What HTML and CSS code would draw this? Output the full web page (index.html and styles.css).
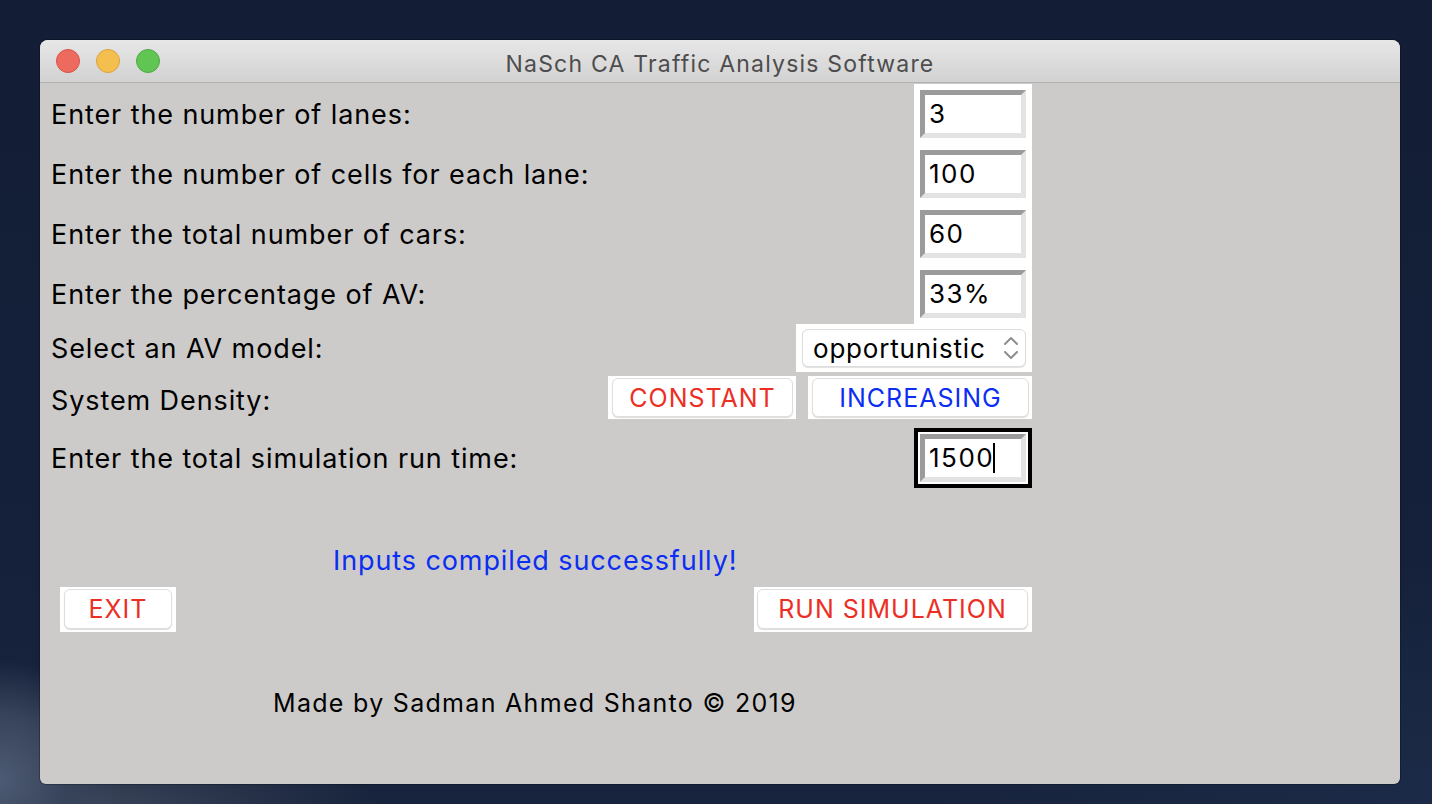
FILE: index.html
```html
<!DOCTYPE html>
<html>
<head>
<meta charset="utf-8">
<title>NaSch CA Traffic Analysis Software</title>
<link rel="stylesheet" href="styles.css">
</head>
<body>
<div class="window">
  <div class="titlebar">
    <div class="lights">
      <span class="light red"></span>
      <span class="light yellow"></span>
      <span class="light green"></span>
    </div>
    <div class="title">NaSch CA Traffic Analysis Software</div>
    <div></div>
  </div>
  <div class="content">
    <div class="form">
      <div class="row entry-row">
        <span class="label">Enter the number of lanes:</span>
        <div class="entry-frame"><div class="entry">3</div></div>
      </div>
      <div class="row entry-row">
        <span class="label">Enter the number of cells for each lane:</span>
        <div class="entry-frame"><div class="entry">100</div></div>
      </div>
      <div class="row entry-row">
        <span class="label">Enter the total number of cars:</span>
        <div class="entry-frame"><div class="entry">60</div></div>
      </div>
      <div class="row entry-row">
        <span class="label">Enter the percentage of AV:</span>
        <div class="entry-frame"><div class="entry">33%</div></div>
      </div>
      <div class="row select-row">
        <span class="label">Select an AV model:</span>
        <div class="select-frame">
          <div class="select">
            <span class="select-text">opportunistic</span>
            <svg class="chevrons" width="16" height="26" viewBox="0 0 16 26">
              <path d="M2 9 L8 3 L14 9" fill="none" stroke="#8e8e8e" stroke-width="2" stroke-linecap="round" stroke-linejoin="round"/>
              <path d="M2 17 L8 23 L14 17" fill="none" stroke="#8e8e8e" stroke-width="2" stroke-linecap="round" stroke-linejoin="round"/>
            </svg>
          </div>
        </div>
      </div>
      <div class="row density-row">
        <span class="label label-low">System Density:</span>
        <div class="density-buttons">
          <div class="btn-frame constant-frame"><div class="btn red-text">CONSTANT</div></div>
          <div class="btn-frame increasing-frame"><div class="btn blue-text">INCREASING</div></div>
        </div>
      </div>
      <div class="row entry-row">
        <span class="label">Enter the total simulation run time:</span>
        <div class="entry-frame focused"><div class="entry">1500<span class="caret"></span></div></div>
      </div>
      <div class="message">Inputs compiled successfully!</div>
      <div class="action-row">
        <div class="btn-frame exit-frame"><div class="btn red-text">EXIT</div></div>
        <div class="btn-frame run-frame"><div class="btn red-text">RUN SIMULATION</div></div>
      </div>
      <div class="footer">Made by Sadman Ahmed Shanto © 2019</div>
    </div>
  </div>
</div>
</body>
</html>
```

FILE: styles.css
```css
html, body {
  margin: 0;
  padding: 0;
}

body {
  width: 1432px;
  height: 804px;
  overflow: hidden;
  font-family: "Inter", "Noto Sans", sans-serif;
  background:
    radial-gradient(ellipse 120px 120px at 0px 780px, #4c5a73 0%, #37435a 55%, rgba(30,40,60,0) 100%),
    radial-gradient(ellipse 320px 60px at 60px 804px, #3d475b 0%, rgba(30,40,60,0) 100%),
    radial-gradient(ellipse 500px 240px at 1432px 804px, #1b2a47 0%, rgba(20,30,55,0) 100%),
    linear-gradient(180deg, #131d35 0%, #14203a 60%, #18243d 100%);
}

.window {
  margin: 40px 0 0 40px;
  width: 1360px;
  height: 744px;
  background: #cccbc9;
  border-radius: 8px 8px 6px 6px;
  overflow: hidden;
  box-shadow: 0 0 0 1px rgba(0,0,0,0.25);
}

.titlebar {
  height: 42px;
  display: grid;
  grid-template-columns: 1fr auto 1fr;
  align-items: center;
  background: linear-gradient(180deg, #e8e7e8 0%, #d3d2d3 100%);
  border-bottom: 1px solid #b2b1b2;
}

.lights {
  display: flex;
  gap: 16px;
  padding-left: 16px;
}

.light {
  width: 24px;
  height: 24px;
  border-radius: 50%;
  box-sizing: border-box;
}

.light.red { background: #ed6a5e; border: 1px solid #d65448; }
.light.yellow { background: #f5bf4f; border: 1px solid #d9a23a; }
.light.green { background: #61c554; border: 1px solid #4ea944; }

.title {
  font-size: 23px;
  color: #4d4d4d;
  letter-spacing: 1.2px;
  padding-top: 5px;
}

.content {
  padding-top: 1px;
}

.form {
  width: 992px;
  display: flex;
  flex-direction: column;
}

.row {
  display: flex;
  justify-content: space-between;
  align-items: center;
  padding-left: 11px;
}

.label {
  font-size: 27px;
  letter-spacing: 0.9px;
  color: #000;
}

.label-low {
  padding-top: 6px;
}

.entry-row {
  height: 60px;
}

.entry-frame {
  width: 118px;
  height: 60px;
  box-sizing: border-box;
  background: #fff;
  padding: 6px;
}

.entry {
  height: 48px;
  box-sizing: border-box;
  border-style: solid;
  border-width: 5px;
  border-color: #9b9b9b #e3e3e3 #e3e3e3 #9b9b9b;
  background: #fff;
  font-size: 26px;
  letter-spacing: 1.5px;
  line-height: 38px;
  padding-left: 4px;
  color: #000;
  display: flex;
  align-items: center;
}

.entry-frame.focused {
  border: 4px solid #000;
  padding: 2px;
}

.caret {
  display: inline-block;
  width: 2px;
  height: 30px;
  background: #000;
  margin-left: -1px;
}

.select-row {
  height: 48px;
  margin-bottom: 4px;
}

.select-frame {
  width: 236px;
  height: 48px;
  box-sizing: border-box;
  background: #fff;
  padding: 5px 6px;
}

.select {
  height: 38px;
  box-sizing: border-box;
  border: 1px solid #dcdcdc;
  border-radius: 6px;
  box-shadow: 0 1px 1px rgba(0,0,0,0.12);
  display: flex;
  align-items: center;
  justify-content: space-between;
  padding: 0 6px 0 10px;
  background: #fff;
}

.select-text {
  font-size: 26px;
  letter-spacing: 0.8px;
  color: #000;
}

.density-row {
  height: 43px;
  margin-bottom: 9px;
}

.density-buttons {
  display: flex;
  gap: 12px;
}

.btn-frame {
  background: #fff;
  box-sizing: border-box;
  height: 43px;
  padding: 2px 3px 2px 4px;
}

.constant-frame { width: 188px; }
.increasing-frame { width: 224px; }

.btn {
  height: 39px;
  box-sizing: border-box;
  border: 1px solid #dedede;
  border-radius: 6px;
  box-shadow: 0 1px 1px rgba(0,0,0,0.14);
  display: flex;
  align-items: center;
  justify-content: center;
  font-size: 25px;
  background: #fff;
  letter-spacing: 1px;
}

.red-text { color: #ec2f24; }
.blue-text { color: #0b2ef2; }

.message {
  margin-top: 58px;
  padding-left: 293px;
  font-size: 27px;
  letter-spacing: 0.9px;
  line-height: 30px;
  color: #0b2ef2;
}

.action-row {
  margin-top: 11px;
  display: flex;
  justify-content: space-between;
  padding-left: 20px;
}

.action-row .btn-frame {
  height: 45px;
  padding: 2px 4px 3px 4px;
}

.action-row .btn {
  height: 40px;
}

.exit-frame { width: 116px; }
.run-frame { width: 278px; padding-left: 3px !important; }

.footer {
  margin-top: 56px;
  padding-left: 233px;
  font-size: 25px;
  line-height: 30px;
  color: #000;
  letter-spacing: 1.3px;
}
```
